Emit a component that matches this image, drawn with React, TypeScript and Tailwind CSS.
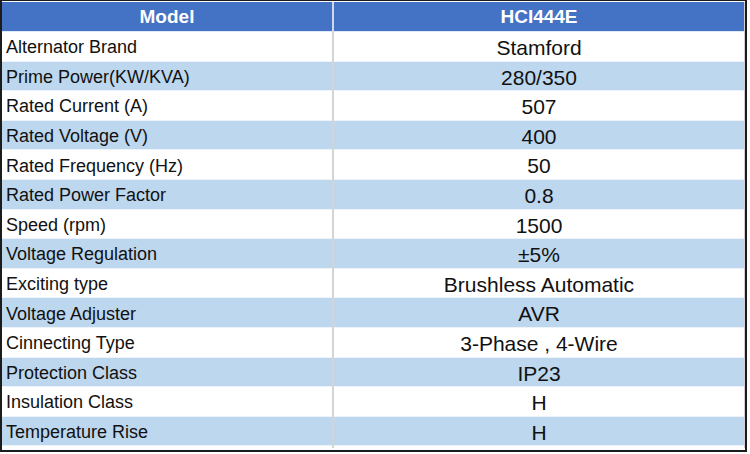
const ROWS: [string, string][] = [
  ["Alternator Brand", "Stamford"],
  ["Prime Power(KW/KVA)", "280/350"],
  ["Rated Current (A)", "507"],
  ["Rated Voltage (V)", "400"],
  ["Rated Frequency (Hz)", "50"],
  ["Rated Power Factor", "0.8"],
  ["Speed (rpm)", "1500"],
  ["Voltage Regulation", "±5%"],
  ["Exciting type", "Brushless Automatic"],
  ["Voltage Adjuster", "AVR"],
  ["Cinnecting Type", "3-Phase , 4-Wire"],
  ["Protection Class", "IP23"],
  ["Insulation Class", "H"],
  ["Temperature Rise", "H"],
];

const App = () => {
  return (
    <div className="w-[750px] h-[454px] bg-white font-['Liberation_Sans',Arial,sans-serif]">
      <div className="w-[747px] h-[452px] border-2 border-t border-[#1c1c1c] bg-white pt-[1px] flex flex-col">
        <div className="grid grid-cols-[332px_1fr] h-[30px] bg-[#4472c4] border-b border-[#dfe8f5] text-white font-bold text-[19px]">
          <div className="flex items-center justify-center border-r-2 border-[#cfd8e8] pt-[1px]">Model</div>
          <div className="flex items-center justify-center border-r border-[#d0d0d0] pt-[1px]">HCI444E</div>
        </div>
        {ROWS.map(([label, value], i) => (
          <div
            key={label}
            className={`grid grid-cols-[332px_1fr] h-[29.6px] border-b border-[#eef3f9] text-[#111] ${
              i % 2 === 0 ? "bg-white" : "bg-[#bdd7ee]"
            }`}
          >
            <div className="flex items-center pl-[4px] border-r-2 border-[#d4d4d4] text-[18px]">{label}</div>
            <div className="flex items-center justify-center border-r border-[#d0d0d0] text-[21px]">{value}</div>
          </div>
        ))}
      </div>
    </div>
  );
};

export default App;
